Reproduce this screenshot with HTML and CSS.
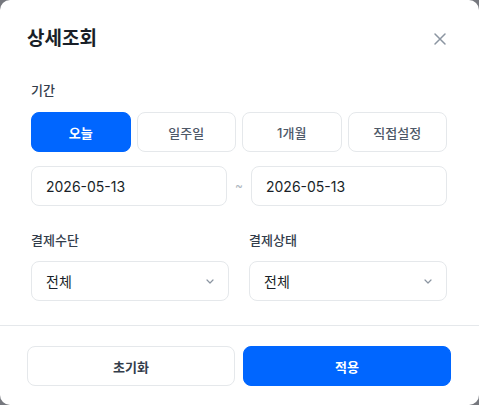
FILE: index.html
```html
<!DOCTYPE html>
<html lang="ko">
<head>
    <meta charset="UTF-8">
    <meta name="viewport" content="width=device-width, initial-scale=1.0">
    <title>상세조회</title>
    <link rel="stylesheet" href="styles.css">
</head>
<body>

<div class="modal">
    <div class="modal-head">
        <h2>상세조회</h2>
        <button class="close-btn" aria-label="닫기">
            <svg width="14" height="14" viewBox="0 0 14 14">
                <path d="M2 2L12 12M12 2L2 12" stroke="#8b95a1" stroke-width="1.5" stroke-linecap="round"/>
            </svg>
        </button>
    </div>

    <div class="modal-body">
        <div class="label">기간</div>
        <div class="period">
            <button class="chip active">오늘</button>
            <button class="chip">일주일</button>
            <button class="chip">1개월</button>
            <button class="chip">직접설정</button>
        </div>

        <div class="dates">
            <input type="text" class="field" value="2026-05-13">
            <span class="tilde">~</span>
            <input type="text" class="field" value="2026-05-13">
        </div>

        <div class="filters">
            <div>
                <div class="label">결제수단</div>
                <div class="field select">
                    <span>전체</span>
                    <svg width="8" height="5" viewBox="0 0 8 5"><path d="M1 1L4 4L7 1" fill="none" stroke="#8b95a1" stroke-width="1.2" stroke-linecap="round" stroke-linejoin="round"/></svg>
                </div>
            </div>
            <div>
                <div class="label">결제상태</div>
                <div class="field select">
                    <span>전체</span>
                    <svg width="8" height="5" viewBox="0 0 8 5"><path d="M1 1L4 4L7 1" fill="none" stroke="#8b95a1" stroke-width="1.2" stroke-linecap="round" stroke-linejoin="round"/></svg>
                </div>
            </div>
        </div>
    </div>

    <div class="modal-foot">
        <button class="btn">초기화</button>
        <button class="btn primary">적용</button>
    </div>
</div>

</body>
</html>
```

FILE: styles.css
```css
body {
    font-family: "Inter", "Noto Sans CJK KR", sans-serif;
    margin: 0;
    background-color: #76787e;
    color: #191f28;
}
button, input {
    font-family: inherit;
}
.modal {
    width: 479px;
    height: 405px;
    background: white;
    border-radius: 10px;
    box-sizing: border-box;
}
.modal-head {
    display: flex;
    align-items: center;
    justify-content: space-between;
    padding: 24px 32px 0 27px;
    height: 30px;
}
.modal-head h2 {
    margin: 0;
    font-size: 19px;
    font-weight: 700;
    line-height: 30px;
}
.close-btn {
    width: 24px;
    height: 24px;
    padding: 0;
    border: none;
    background: none;
    display: flex;
    align-items: center;
    justify-content: center;
    margin-right: -5px;
    cursor: pointer;
}
.modal-body {
    padding: 26px 32px 24px 31px;
}
.label {
    font-size: 13px;
    line-height: 20px;
    color: #333d4b;
    font-weight: 500;
}
.period {
    display: grid;
    grid-template-columns: repeat(4, 1fr);
    gap: 6px;
    margin-top: 12px;
}
.chip {
    height: 40px;
    border: 1px solid #e5e8eb;
    border-radius: 8px;
    background: white;
    color: #4e5968;
    font-size: 13px;
    font-weight: 500;
    cursor: pointer;
}
.chip.active {
    background: #0066ff;
    border-color: #0066ff;
    color: white;
    font-weight: 700;
}
.dates {
    display: grid;
    grid-template-columns: 1fr 24px 1fr;
    margin-top: 14px;
    margin-bottom: 24px;
}
.field {
    height: 40px;
    box-sizing: border-box;
    border: 1px solid #e5e8eb;
    border-radius: 8px;
    padding: 0 14px;
    font-size: 14px;
    color: #191f28;
    background: white;
    min-width: 0;
    outline: none;
}
.tilde {
    text-align: center;
    line-height: 40px;
    color: #b0b8c1;
    font-size: 12px;
}
.filters {
    display: grid;
    grid-template-columns: 1fr 1fr;
    gap: 20px;
}
.filters .label {
    margin-bottom: 11px;
}
.select {
    display: flex;
    align-items: center;
    justify-content: space-between;
}
.modal-foot {
    border-top: 1px solid #e5e8eb;
    padding: 20px 28px 0 27px;
    display: grid;
    grid-template-columns: 1fr 1fr;
    gap: 8px;
}
.btn {
    height: 40px;
    border: 1px solid #e5e8eb;
    border-radius: 8px;
    background: white;
    color: #333d4b;
    font-size: 13px;
    font-weight: 700;
    cursor: pointer;
}
.btn.primary {
    background: #0066ff;
    border-color: #0066ff;
    color: white;
}
```
